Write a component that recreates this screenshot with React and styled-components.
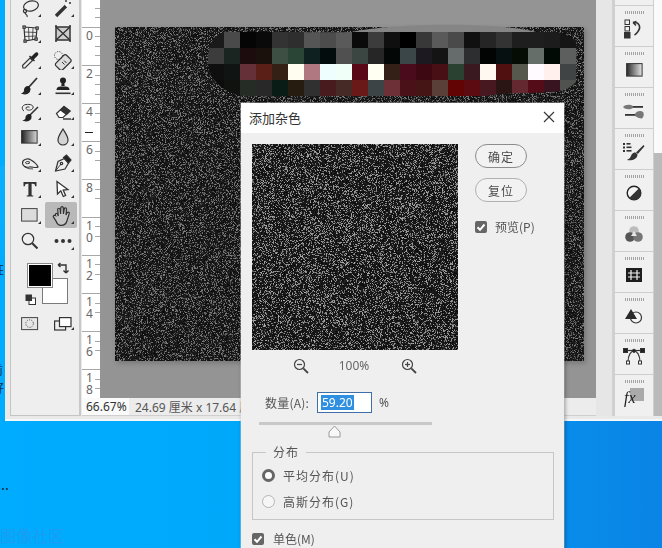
import React, { useEffect, useRef } from "react";
import styled, { createGlobalStyle } from "styled-components";

const Global = createGlobalStyle`
  html, body { margin: 0; padding: 0; background: #00a8f8; }
  * { box-sizing: border-box; }
`;

const CJK = `"Noto Sans CJK SC", "Noto Sans", sans-serif`;
const UI = `"Noto Sans", "Noto Sans CJK SC", sans-serif`;

const Desktop = styled.div`
  position: relative;
  width: 662px;
  height: 548px;
  overflow: hidden;
  background:
    linear-gradient(168deg, transparent 0 24%, rgba(255,255,255,.04) 24.4%, transparent 40%),
    linear-gradient(90deg, #00acff 0%, #00a8fa 38%, #0a84e6 100%);
  font-family: ${UI};
`;

const DesktopLabel = styled.span`
  position: absolute;
  left: ${p => p.$x}px;
  top: ${p => p.$y}px;
  font: ${p => p.$size || 12}px/14px ${CJK};
  font-weight: ${p => p.$weight || 400};
  color: ${p => p.$c || "#12324a"};
`;

const Window = styled.div`
  margin-left: 5px;
  height: 421px;
  display: flex;
  background: #e9e9e9;
  padding: 0 0 3px 5px;
  border-bottom: 2px solid #f4f8fa;
  overflow: hidden;
`;

const Toolbar = styled.div`
  width: 71px;
  flex: none;
  background: #eeeeee;
  border-left: 1px solid #c4c4c4;
  border-right: 2px solid #c8c8c8;
  border-bottom: 1px solid #c4c4c4;
  padding: 0 0 0 2px;
`;

const ToolGrid = styled.div`
  margin-top: -5px;
  display: grid;
  grid-template-columns: 33px 33px;
  grid-auto-rows: 25.9px;
`;

const Tool = styled.div`
  position: relative;
  display: flex;
  align-items: center;
  justify-content: center;
  border-radius: 2px;
  background: ${p => (p.$active ? "#b9b9b9" : "transparent")};
  margin: ${p => (p.$active ? "0 2px 0 -1px" : "0")};
  &::after {
    content: "";
    display: ${p => (p.$more ? "block" : "none")};
    position: absolute;
    right: ${p => (p.$active ? "3px" : "5px")};
    bottom: 4px;
    border-style: solid;
    border-width: 0 0 3px 3px;
    border-color: transparent transparent #333 transparent;
  }
`;

const Swatches = styled.div`
  position: relative;
  height: 44px;
  margin: 9px 0 0 14px;
  width: 50px;
`;

const BackSwatch = styled.div`
  position: absolute;
  left: 15px;
  top: 15px;
  width: 26px;
  height: 26px;
  background: #ffffff;
  border: 1px solid #7a7a7a;
`;

const FrontSwatch = styled.div`
  position: absolute;
  left: 0;
  top: 0;
  width: 26px;
  height: 25px;
  background: #000;
  border: 1px solid #8a8a8a;
  box-shadow: inset 0 0 0 1px #fff;
`;

const SwapIcon = styled.svg`
  position: absolute;
  left: 30px;
  top: -1px;
`;

const DefaultIcon = styled.svg`
  position: absolute;
  left: -2px;
  top: 31px;
`;

const ModeRow = styled.div`
  display: grid;
  grid-template-columns: 33px 33px;
  margin-top: 7px;
  height: 20px;
`;

const Center = styled.div`
  flex: none;
  width: 515px;
  display: flex;
  flex-direction: column;
  min-height: 0;
`;

const Stage = styled.div`
  flex: 1;
  min-height: 0;
  display: flex;
`;

const Ruler = styled.div`
  position: relative;
  width: 18px;
  flex: none;
  background: #fff;
  overflow: hidden;
  margin-left: 1px;
`;

const RulerScroll = styled.div`
  margin-top: -11px;
`;

const RulerMark = styled.div`
  height: 38px;
  padding: 2px 0 0 4px;
  border-top: 1px solid #a8a8a8;
  color: #666;
  font: 12px/12px ${UI};
  white-space: pre-line;
  background-image: repeating-linear-gradient(180deg, transparent 0 8.5px, #a8a8a8 8.5px 9.5px);
  background-repeat: no-repeat;
  background-size: 5px 100%;
  background-position: right top;
`;

const RulerCursor = styled.div`
  position: absolute;
  left: 3px;
  top: 132px;
  width: 8px;
  height: 1px;
  background: #222;
`;

const Workspace = styled.div`
  flex: 1;
  background: #949494;
  padding: 27px 0 0 15px;
  overflow: hidden;
`;

const Doc = styled.div`
  position: relative;
  width: 469px;
  height: 334px;
  box-shadow: 2px 2px 5px rgba(0,0,0,.2);
`;

const NoiseCanvas = styled.canvas`
  display: block;
  width: ${p => p.$w}px;
  height: ${p => p.$h}px;
  filter: blur(.4px);
`;

const Mosaic = styled.svg`
  position: absolute;
  left: 91px;
  top: 1px;
  overflow: visible;
`;

const StatusBar = styled.div`
  height: 18px;
  flex: none;
  margin-left: 1px;
  background: #ececec;
  display: flex;
  align-items: center;
  font-size: 12px;
  color: #555;
  white-space: nowrap;
  border-bottom: 1px solid #cfcfcf;
`;

const ZoomText = styled.span`
  padding: 0 4px;
  height: 100%;
  line-height: 17px;
  background: #fafafa;
  color: #333;
  width: 47px;
  flex: none;
`;

const DocInfo = styled.span`
  padding-left: 6px;
  font-family: ${UI};
`;

const Dock = styled.div`
  flex: none;
  display: flex;
  min-width: 0;
`;

const DockGutter = styled.div`
  width: 18px;
  background: #e6e6e6;
  border-right: 2px solid #d0d0d0;
`;

const DockPanel = styled.div`
  width: 40px;
  background: #f0f0f0;
  border-left: 1px solid #cfcfcf;
  border-right: 1px solid #cfcfcf;
  padding-top: 5px;
  display: flex;
  flex-direction: column;
`;

const DockItem = styled.div`
  height: 41px;
  flex: none;
  border-top: 1px solid #cdcdcd;
  position: relative;
  display: flex;
  align-items: center;
  justify-content: center;
  padding-top: 5px;
  &::before {
    content: "";
    position: absolute;
    top: 5px;
    left: 10px;
    width: 20px;
    height: 3px;
    background: repeating-linear-gradient(90deg, #a4a4a4 0 1px, transparent 1px 2px);
  }
`;

const DockEdge = styled.div`
  width: 8px;
  background: linear-gradient(180deg, #fafafa 0 153px, #bababa 153px);
`;

const Dialog = styled.div`
  position: absolute;
  left: 241px;
  top: 103px;
  width: 323px;
  height: 460px;
  background: #efefef;
  box-shadow: 1px 0 4px rgba(0,0,0,.4), 0 0 0 1px rgba(255,255,255,.35);
  color: #555;
  font-family: ${CJK};
`;

const TitleBar = styled.div`
  height: 30px;
  background: #fff;
  display: flex;
  align-items: center;
  justify-content: space-between;
  padding: 0 9px 2px 8px;
  font-size: 13px;
  color: #333;
`;

const DialogBody = styled.div`
  padding: 11px 10px 0 11px;
`;

const TopRow = styled.div`
  display: flex;
  gap: 17px;
`;

const PreviewBox = styled.div`
  width: 206px;
  height: 206px;
  flex: none;
  overflow: hidden;
`;

const SideCol = styled.div`
  display: flex;
  flex-direction: column;
  align-items: flex-start;
  width: 70px;
`;

const PillButton = styled.div`
  width: 52px;
  height: 24px;
  border-radius: 12px;
  background: #f2f2f2;
  border: 1px solid ${p => (p.$primary ? "#8c8c8c" : "#b0b0b0")};
  display: flex;
  align-items: center;
  justify-content: center;
  font-size: 12px;
  letter-spacing: 1px;
  color: #4a4a4a;
  margin-bottom: 10px;
`;

const CheckRow = styled.div`
  display: flex;
  align-items: center;
  font-size: 12px;
  gap: ${p => p.$gap || 8}px;
  margin-top: ${p => p.$top || 0}px;
  color: #555;
  white-space: nowrap;
`;

const CheckBox = styled.span`
  width: 12px;
  height: 12px;
  border-radius: 2px;
  background: #666;
  display: flex;
  align-items: center;
  justify-content: center;
  flex: none;
`;

const ZoomRow = styled.div`
  display: flex;
  align-items: center;
  height: 16px;
  margin-top: 8px;
  padding-left: 41px;
  font: 12px/16px ${UI};
  color: #666;
`;

const Percent = styled.span`
  width: 92px;
  text-align: center;
  padding-right: 2px;
`;

const AmountRow = styled.div`
  display: flex;
  align-items: center;
  margin: 18px 0 0 13px;
  height: 21px;
  font-size: 12px;
  color: #555;
`;

const AmountLabel = styled.span`
  width: 52px;
  letter-spacing: .2px;
`;

const AmountInput = styled.div`
  width: 55px;
  height: 21px;
  flex: none;
  background: #fff;
  border: 1px solid #3f6fa8;
  padding: 2px 0 0 3px;
  display: flex;
`;

const Selected = styled.span`
  background: #2f8fe0;
  color: #fff;
  font: 12px/15px ${UI};
  height: 15px;
  padding: 0 1px;
`;

const Unit = styled.span`
  margin-left: 7px;
  font-family: ${UI};
`;

const Track = styled.div`
  position: relative;
  margin: 9px 0 0 7px;
  width: 173px;
  height: 3px;
  background: #c8c8c8;
`;

const Thumb = styled.svg`
  position: absolute;
  left: 69px;
  top: 3px;
`;

const Group = styled.div`
  position: relative;
  margin-top: 27px;
  width: 302px;
  height: 68px;
  border: 1px solid #c6c6c6;
  padding: 14px 0 0 9px;
  display: flex;
  flex-direction: column;
  gap: 10px;
`;

const Legend = styled.span`
  position: absolute;
  left: 13px;
  top: -9px;
  padding: 0 7px;
  background: #efefef;
  font-size: 12px;
  line-height: 16px;
  letter-spacing: 1px;
  color: #555;
`;

const RadioRow = styled.div`
  display: flex;
  align-items: center;
  height: 16px;
  gap: 8px;
  font-size: 12px;
  letter-spacing: 1px;
  color: #555;
`;

const Radio = styled.span`
  width: 13px;
  height: 13px;
  border-radius: 50%;
  flex: none;
  background: ${p => (p.$on ? "#fff" : "#f6f6f6")};
  border: ${p => (p.$on ? "3.5px solid #666" : "1px solid #b4b4b4")};
`;

/* ---------- noise ---------- */
function Noise({ w, h, seed, density, low, high }) {
  const ref = useRef(null);
  useEffect(() => {
    const ctx = ref.current.getContext("2d");
    const img = ctx.createImageData(w, h);
    let s = seed;
    const rnd = () => {
      s = (s * 1664525 + 1013904223) >>> 0;
      return ((s >>> 8) & 0xffff) / 65536;
    };
    for (let i = 0; i < w * h; i++) {
      const v = rnd() < density ? low + rnd() * (high - low) : 10 + rnd() * 26;
      img.data[i * 4] = v;
      img.data[i * 4 + 1] = v;
      img.data[i * 4 + 2] = v;
      img.data[i * 4 + 3] = 255;
    }
    ctx.putImageData(img, 0, 0);
  }, [w, h, seed, density, low, high]);
  return <NoiseCanvas ref={ref} width={w} height={h} $w={w} $h={h} />;
}

/* ---------- mosaic ---------- */
const ROWS = [
  "#1a1a1a #4a4a4a #050505 #0a0a0a #333333 #2e2e2e #555555 #4c4c4c #5a5a5a #0a0a0a #3c3c3c #0f0f0f #000000 #383838 #5a5a5a #4a4a4a #101010 #252525 #333333 #1e1e1e #1e1e1e #1c1c1c #151515",
  "#3c3c3c #1a2420 #1c0c0e #1a100c #3d4f43 #2a4535 #0f2020 #020c0c #505050 #3b4643 #262626 #030806 #3a4648 #1c1a20 #141414 #666c6c #2c2e30 #020404 #061010 #040c04 #666e6a #020a06 #5c5f5e",
  "#0f0f0f #101412 #653038 #5a2018 #352015 #fffdf0 #b07880 #eefeff #f0fff8 #5a0818 #fffff2 #352018 #4a0c1c #3e0812 #480f14 #2a4030 #3a1a20 #fff8f0 #50100f #56584e #fffaff #fff0ee #404444",
  "#0c0c0c #101210 #252b25 #282828 #0a1c16 #261c10 #303030 #481c1f #452a25 #6a1818 #3c4446 #6c3036 #4a1218 #451414 #5a3e38 #620404 #5c0c10 #481820 #2a1414 #642830 #540c18 #381420 #505250",
].map(r => r.split(" "));

const MosaicArt = () => (
  <Mosaic width="380" height="70" viewBox="0 0 380 70">
    <defs>
      <clipPath id="blob">
        <path d="M22 3 C60 3 130 6 160 3 L340 3 C368 4 376 16 376 32 C376 54 366 64 340 64 C320 66 300 64 280 68 L40 68 C14 66 2 48 2 34 C2 16 8 5 22 3 Z" />
      </clipPath>
    </defs>
    <path d="M146 4 C190 -5 290 -6 330 4 Z" fill="#858585" />
    <g clipPath="url(#blob)">
      {ROWS.map((row, r) =>
        row.map((c, i) => <rect key={`${r}-${i}`} x={2 + i * 16} y={4 + r * 16} width="16.2" height="16.2" fill={c} />)
      )}
    </g>
  </Mosaic>
);

/* ---------- icons ---------- */
const Ico = ({ children, s = 20, vb = 20 }) => (
  <svg width={s} height={s} viewBox={`0 0 ${vb} ${vb}`} fill="none" stroke="#333" strokeWidth="1.2">
    {children}
  </svg>
);

const Lasso = () => (
  <Ico>
    <ellipse cx="11" cy="8" rx="7.5" ry="5" transform="rotate(-15 11 8)" />
    <circle cx="5" cy="13" r="1.6" />
    <path d="M5 15 c1 2 3 2 2 4" />
  </Ico>
);
const Wand = () => (
  <Ico>
    <path d="M3 18 L13 8" strokeWidth="3.4" />
    <path d="M13 8 L15 6" stroke="#fff" strokeWidth="2" />
    <path d="M13 1v3M16 2v0M18 5h-2M18 0v2" strokeWidth="1.4" />
  </Ico>
);
const MeshCrop = () => (
  <Ico>
    <path d="M4 3 L17 4 L16 15 L5 17 Z" />
    <path d="M8.5 3.5 L9 16M13 4 L12.5 16M4.5 8 L17 8.5M5 12.5 L16.5 12" strokeWidth=".8" />
    <g fill="#fff">
      <rect x="3" y="2" width="2.2" height="2.2" />
      <rect x="16" y="3" width="2.2" height="2.2" />
      <rect x="15" y="14" width="2.2" height="2.2" />
      <rect x="4" y="16" width="2.2" height="2.2" />
    </g>
  </Ico>
);
const FrameX = () => (
  <Ico>
    <rect x="3" y="3" width="14" height="13" fill="#ccc" strokeWidth="1.5" />
    <path d="M3 3 L17 16M17 3 L3 16" strokeWidth="1.4" />
    <path d="M2 2h2M16 2h2M2 17h2M16 17h2" strokeWidth="1.6" />
  </Ico>
);
const Dropper = () => (
  <Ico>
    <path d="M3 18 L2.5 15.5 L10 8 L12.5 10.5 L5 18 Z" />
    <path d="M9.5 6 L14.5 11 M11.5 7.5 L15.5 3.5 C17 2 18.6 3.5 17 5.2 L13 9.2 Z" fill="#222" stroke="#222" strokeWidth="1.4" />
  </Ico>
);
const Bandage = () => (
  <Ico>
    <rect x="5.5" y="5" width="9.5" height="15" rx="2" transform="rotate(45 10.2 12.5)" fill="#ddd" />
    <path d="M9 12l2.5 2.5M11 10.5l2.5 2.5" strokeWidth="1" />
    <circle cx="5.5" cy="5.5" r="4" strokeDasharray="1.2 1.2" strokeWidth=".9" />
  </Ico>
);
const Brush = () => (
  <Ico>
    <path d="M17 2 L8.5 11.5" strokeWidth="1.8" />
    <path d="M8.5 10.5 C5.5 10.5 4.5 13 4.5 15 C4.5 16.5 3.5 17 2.5 17.5 C6 18.5 10 17 10 13 Z" fill="#222" stroke="#222" />
  </Ico>
);
const Stamp = () => (
  <Ico>
    <circle cx="10" cy="4.5" r="3" fill="#222" stroke="none" />
    <path d="M8.7 6h2.6l.4 4h-3.4z" fill="#222" stroke="none" />
    <path d="M3.5 14 C3.5 11 6 10.5 8 10.5h4c2 0 4.5 .5 4.5 3.5z" fill="#222" stroke="none" />
    <path d="M2.5 17.3h15" strokeWidth="1.6" />
  </Ico>
);
const HistoryBrush = () => (
  <Ico>
    <path d="M18 5 L9 14" strokeWidth="1.6" />
    <path d="M9.5 12.5 C6.5 12.5 6 15 6 16.5 C6 17.5 5 18 4 18.5 C8 19.5 11.5 17.5 11 14 Z" fill="#222" stroke="#222" />
    <path d="M4 9 C1 7 2 3 6 2.5 C10 2 14 3 13 6 C12 8.5 7 9 6 6.5 C5.5 5 8 4.5 9.5 5.2" strokeWidth="1" />
  </Ico>
);
const Eraser = () => (
  <Ico>
    <path d="M3.5 11.5 L11 4.5 L17 9 L10 15.5 L6 15.5 Z" fill="#fff" />
    <path d="M7.5 8 L11 4.5 L17 9 L13.5 12.5 Z" fill="#333" />
    <path d="M10 17h8" strokeWidth="1.4" />
  </Ico>
);
const Gradient = () => (
  <svg width="18" height="15" viewBox="0 0 18 15">
    <defs>
      <linearGradient id="tg" x1="0" y1="0" x2="1" y2="0">
        <stop offset="0" stopColor="#222" />
        <stop offset="1" stopColor="#d8d8d8" />
      </linearGradient>
    </defs>
    <rect x=".6" y=".6" width="15.5" height="12.5" fill="url(#tg)" stroke="#333" strokeWidth="1" />
  </svg>
);
const Drop = () => (
  <Ico>
    <path d="M10 2 C7 7 5 9.5 5 13 C5 16 7.2 18 10 18 C12.8 18 15 16 15 13 C15 9.5 13 7 10 2 Z" fill="#d4d4d4" />
  </Ico>
);
const Smudge = () => (
  <Ico>
    <path d="M2.5 10 C2.5 6 8 5 11 7 C13.5 8.5 17 11 18 14 C16 15.5 12 13.5 9.5 14 C6 14.8 2.5 13.5 2.5 10 Z" />
    <path d="M5.5 10 C5 8.5 9 8 10 9.5 C9 11 6 11 5.5 10 Z" strokeWidth="1" />
    <path d="M5 13.5 C8 16.5 11 15.5 13 16" strokeWidth="1" />
  </Ico>
);
const Pen = () => (
  <Ico>
    <path d="M2.5 18 L5 8.5 L11.5 5.5 L15.5 10 L12 16 Z" />
    <path d="M10.5 4.5 L13.5 2 L18 7 L15.5 10 Z" fill="#222" />
    <path d="M2.5 18 L8 11" strokeWidth=".9" />
    <circle cx="8.5" cy="10.5" r="1.2" />
  </Ico>
);
const TypeT = () => (
  <svg width="20" height="20" viewBox="0 0 20 20" fill="#333">
    <path d="M3.5 3h13v4.2h-1.4c-.2-1.6-.6-2.4-2.3-2.4h-1.2v10.6c0 .8.3 1 1.7 1v1.2H6.7v-1.2c1.4 0 1.7-.2 1.7-1V4.800H7.200c-1.700 0-2.100.8-2.300 2.400H3.500z" />
  </svg>
);
const Arrow = () => (
  <Ico>
    <path d="M4 2.500 L4.500 15 L7.800 11.800 L10.300 17.500 L12.600 16.500 L10.200 11 L14.800 10.600 Z" fill="#fff" strokeWidth="1.3" />
  </Ico>
);
const RectShape = () => (
  <svg width="18" height="15" viewBox="0 0 18 15">
    <rect x=".6" y=".6" width="15.500" height="12.500" fill="#dcdcdc" stroke="#444" strokeWidth="1" />
  </svg>
);
const Hand = () => (
  <Ico s={22}>
    <path d="M5 10.500 C4.500 9 5.500 7.800 6.800 9 L7.500 11 L7 5 C7 3.500 9 3.500 9.200 5 L9.600 9 L9.800 3.500 C10 2 12 2 12.100 3.500 L12.200 9 L13 4.500 C13.300 3 15.100 3.400 15 5 L14.500 10 L15.700 7.800 C16.500 6.800 18 7.500 17.400 9 L15.500 15 C14.800 18 13 19.500 10 19.500 C7.500 19.500 6.300 18 5.500 15.500 L3.200 12 C2.500 10.800 4 9.800 5 10.500 Z" fill="#c4c4c4" strokeWidth="1.1" />
  </Ico>
);
const Magnifier = () => (
  <Ico>
    <circle cx="8" cy="8" r="5.700" strokeWidth="1.200" />
    <path d="M12.200 12.200 L17.500 17.500" strokeWidth="2" />
  </Ico>
);
const Dots = () => (
  <svg width="20" height="6" viewBox="0 0 20 6" fill="#333">
    <circle cx="3.500" cy="3" r="2" />
    <circle cx="10" cy="3" r="2" />
    <circle cx="16.500" cy="3" r="2" />
  </svg>
);
const QuickMask = () => (
  <svg width="18" height="14" viewBox="0 0 18 14" fill="none">
    <rect x=".6" y=".6" width="16" height="12" fill="#e6e6e6" stroke="#444" />
    <circle cx="8.600" cy="6.600" r="3.800" stroke="#555" strokeDasharray="1.200 1.200" />
  </svg>
);
const ScreenMode = () => (
  <svg width="18" height="14" viewBox="0 0 18 14" fill="none" stroke="#333" strokeWidth="1.200">
    <rect x=".6" y="4" width="11" height="9" fill="#eee" />
    <rect x="5.500" y=".6" width="11.500" height="9" fill="#fff" />
  </svg>
);
const SmallMag = ({ plus }) => (
  <svg width="16" height="16" viewBox="0 0 16 16" fill="none" stroke="#444" strokeWidth="1.200">
    <circle cx="6.500" cy="6.500" r="5" />
    <path d="M10.300 10.300 L15 15" strokeWidth="1.800" />
    <path d="M4 6.500h5" />
    {plus && <path d="M6.500 4v5" />}
  </svg>
);
const Tick = () => (
  <svg width="10" height="10" viewBox="0 0 10 10" fill="none" stroke="#fff" strokeWidth="2">
    <path d="M1.500 5.200 L4 7.800 L8.500 2.500" />
  </svg>
);

/* dock icons */
const DockHistory = () => (
  <svg width="20" height="20" viewBox="0 0 20 20" fill="none" stroke="#333">
    <rect x="1" y="1" width="4.500" height="4.500" />
    <rect x="1" y="7.500" width="4.500" height="4.500" />
    <rect x=".5" y="13.500" width="5.500" height="5.500" fill="#333" />
    <path d="M9 3.500 L12 6.500 M9 3.500 L12.500 2.500 M9.500 3.600 C16 3 17 9 14 12.500 C13 14 11.500 15.500 10.500 16" strokeWidth="1.500" />
  </svg>
);
const DockGradient = () => (
  <svg width="17" height="14" viewBox="0 0 17 14">
    <defs>
      <linearGradient id="dg" x1="0" y1="0" x2="1" y2="0">
        <stop offset="0" stopColor="#2a2a2a" />
        <stop offset="1" stopColor="#e4e4e4" />
      </linearGradient>
    </defs>
    <rect x=".6" y=".6" width="15.500" height="12.500" fill="url(#dg)" stroke="#333" />
  </svg>
);
const DockSliders = () => (
  <svg width="22" height="16" viewBox="0 0 22 16" fill="#555">
    <path d="M0 4 C2 1.500 7 1 10 3 L10 5 C7 7 2 6.500 0 4 Z" fill="#777" />
    <rect x="10" y="3" width="10" height="1.800" fill="#333" />
    <rect x="2" y="11" width="10" height="1.800" fill="#333" />
    <path d="M12 11 C13 8 18 7 20 9 C21.500 11 20.500 14 19 15.500 C16.500 15.500 13.500 14 12 13 Z" fill="#777" />
  </svg>
);
const DockList = () => (
  <svg width="22" height="18" viewBox="0 0 22 18" fill="#333" stroke="none">
    <rect x="0" y="0" width="2" height="2" />
    <rect x="3.500" y="0" width="4" height="1.600" />
    <rect x="0" y="3.500" width="2" height="2" />
    <rect x="3.500" y="3.500" width="5" height="1.600" />
    <rect x="0" y="7" width="2" height="2" />
    <rect x="3.500" y="7" width="5" height="1.600" />
    <path d="M20.500 2 L13 9.500 L14.800 11 L21.500 3.200 Z" />
    <path d="M12.500 9.500 C9 9.500 8.500 12 7.500 14 C6.800 15.500 5.500 16 4 17 C9 18 14.500 16 14.500 11.500 Z" />
  </svg>
);
const DockContrast = () => (
  <svg width="16" height="16" viewBox="0 0 16 16">
    <circle cx="8" cy="8" r="6.800" fill="#f4f4f4" stroke="#222" strokeWidth="1.400" />
    <path d="M13 3.200 A6.800 6.800 0 0 1 3.200 13 Z" fill="#333" />
  </svg>
);
const DockWheel = () => (
  <svg width="18" height="16" viewBox="0 0 18 16">
    <circle cx="9" cy="5" r="4.800" fill="#bdbdbd" />
    <circle cx="5" cy="11" r="4.800" fill="#555" />
    <circle cx="13" cy="11" r="4.800" fill="#777" />
    <path d="M9 5 L6 10 L12 10 Z" fill="#e6e6e6" />
  </svg>
);
const DockGridIcon = () => (
  <svg width="16" height="14" viewBox="0 0 16 14">
    <rect width="16" height="14" fill="#1d1d1d" />
    <path d="M5 2v10M11 2v10M2 5h12M2 9h12" stroke="#f0f0f0" strokeWidth="1.200" />
  </svg>
);
const DockShape = () => (
  <svg width="18" height="16" viewBox="0 0 18 16">
    <circle cx="11" cy="9.500" r="5.500" fill="#f4f4f4" stroke="#333" strokeWidth="1.200" />
    <path d="M6 1 L12 11 L0 11 Z" fill="#2a2a2a" />
  </svg>
);
const DockBezier = () => (
  <svg width="22" height="17" viewBox="0 0 22 17" fill="none" stroke="#333">
    <path d="M3 2.500h16" strokeWidth="1.200" />
    <path d="M5 14 C5 7 8 3 11 3 C14 3 17 7 17 14" strokeWidth="1.100" />
    <rect x=".5" y=".5" width="4" height="4" fill="#222" />
    <rect x="17.500" y=".5" width="4" height="4" fill="#222" />
    <circle cx="11" cy="2.800" r="1.600" fill="#222" />
    <rect x="3.500" y="13" width="3" height="3" fill="#fff" />
    <rect x="15.500" y="13" width="3" height="3" fill="#fff" />
  </svg>
);
const FxWrap = styled.div`
  position: relative;
  width: 20px;
  height: 20px;
  font: italic 16px/20px "Liberation Serif", serif;
  color: #222;
  display: flex;
  align-items: flex-end;
  &::before {
    content: "";
    position: absolute;
    right: 0;
    top: 0;
    width: 14px;
    height: 13px;
    background: #aaa;
  }
`;
const FxText = styled.span`
  position: relative;
  margin-top: 2px;
`;

const LEFT_TOOLS = [
  [Lasso, 1], [Wand, 1], [MeshCrop, 1], [FrameX, 0], [Dropper, 1], [Bandage, 1],
  [Brush, 1], [Stamp, 1], [HistoryBrush, 1], [Eraser, 1], [Gradient, 1], [Drop, 1],
  [Smudge, 1], [Pen, 1], [TypeT, 1], [Arrow, 1], [RectShape, 1], [Hand, 1], [Magnifier, 0], [Dots, 1],
];

const DOCK = [DockHistory, DockGradient, DockSliders, DockList, DockContrast, DockWheel, DockGridIcon, DockShape, DockBezier];
const MARKS = ["", "0", "2", "4", "6", "8", "1\n0", "1\n2", "1\n4", "1\n6", "1\n8"];

export default function App() {
  return (
    <>
      <Global />
      <Desktop>
        <DesktopLabel $x={-8} $y={263}>狂</DesktopLabel>
        <DesktopLabel $x={-9} $y={363}>前</DesktopLabel>
        <DesktopLabel $x={-8} $y={381}>好</DesktopLabel>
        <DesktopLabel $x={-3} $y={482} $weight={700}>…</DesktopLabel>
        <DesktopLabel $x={0} $y={528} $size={16} $c="#1a9cf2">图像社区</DesktopLabel>
        <Window>
          <Toolbar>
            <ToolGrid>
              {LEFT_TOOLS.map(([I, more], i) => (
                <Tool key={i} $more={!!more} $active={I === Hand}>
                  <I />
                </Tool>
              ))}
            </ToolGrid>
            <Swatches>
              <BackSwatch />
              <FrontSwatch />
              <SwapIcon width="14" height="14" viewBox="0 0 14 14" fill="none" stroke="#333" strokeWidth="1.400">
                <path d="M1 3h8v7M1 3l2.500-2M1 3l2.500 2M9 11l-2.500-2.500M9 11l2.500-2.500" />
              </SwapIcon>
              <DefaultIcon width="11" height="11" viewBox="0 0 11 11">
                <rect x="4" y="4" width="6.500" height="6.500" fill="#fff" stroke="#333" />
                <rect x=".5" y=".5" width="6.500" height="6.500" fill="#333" />
              </DefaultIcon>
            </Swatches>
            <ModeRow>
              <Tool><QuickMask /></Tool>
              <Tool $more><ScreenMode /></Tool>
            </ModeRow>
          </Toolbar>
          <Center>
            <Stage>
              <Ruler>
                <RulerScroll>
                  {MARKS.map((m, i) => <RulerMark key={i}>{m}</RulerMark>)}
                </RulerScroll>
                <RulerCursor />
              </Ruler>
              <Workspace>
                <Doc>
                  <Noise w={469} h={334} seed={12345} density={0.3} low={60} high={135} />
                  <MosaicArt />
                </Doc>
              </Workspace>
            </Stage>
            <StatusBar>
              <ZoomText>66.67%</ZoomText>
              <DocInfo>24.69 厘米 x 17.64 厘米 (72 ppi)</DocInfo>
            </StatusBar>
          </Center>
          <Dock>
            <DockGutter />
            <DockPanel>
              {DOCK.map((I, i) => <DockItem key={i}><I /></DockItem>)}
              <DockItem>
                <FxWrap><FxText>fx</FxText></FxWrap>
              </DockItem>
            </DockPanel>
            <DockEdge />
          </Dock>
        </Window>
        <Dialog>
          <TitleBar>
            <span>添加杂色</span>
            <svg width="12" height="12" viewBox="0 0 12 12" stroke="#333" strokeWidth="1.100">
              <path d="M1 1 L11 11M11 1 L1 11" />
            </svg>
          </TitleBar>
          <DialogBody>
            <TopRow>
              <PreviewBox><Noise w={206} h={206} seed={987} density={0.28} low={90} high={175} /></PreviewBox>
              <SideCol>
                <PillButton $primary>确定</PillButton>
                <PillButton>复位</PillButton>
                <CheckRow $top={6}>
                  <CheckBox><Tick /></CheckBox>
                  <span>预览(P)</span>
                </CheckRow>
              </SideCol>
            </TopRow>
            <ZoomRow>
              <SmallMag />
              <Percent>100%</Percent>
              <SmallMag plus />
            </ZoomRow>
            <AmountRow>
              <AmountLabel>数量(A):</AmountLabel>
              <AmountInput><Selected>59.20</Selected></AmountInput>
              <Unit>%</Unit>
            </AmountRow>
            <Track>
              <Thumb width="13" height="13" viewBox="0 0 13 13" fill="#f8f8f8" stroke="#9a9a9a">
                <path d="M6.500 1 L12 7 L12 12 L1 12 L1 7 Z" />
              </Thumb>
            </Track>
            <Group>
              <Legend>分布</Legend>
              <RadioRow><Radio $on />平均分布(U)</RadioRow>
              <RadioRow><Radio />高斯分布(G)</RadioRow>
            </Group>
            <CheckRow $top={10} $gap={9}>
              <CheckBox><Tick /></CheckBox>
              <span>单色(M)</span>
            </CheckRow>
          </DialogBody>
        </Dialog>
      </Desktop>
    </>
  );
}
